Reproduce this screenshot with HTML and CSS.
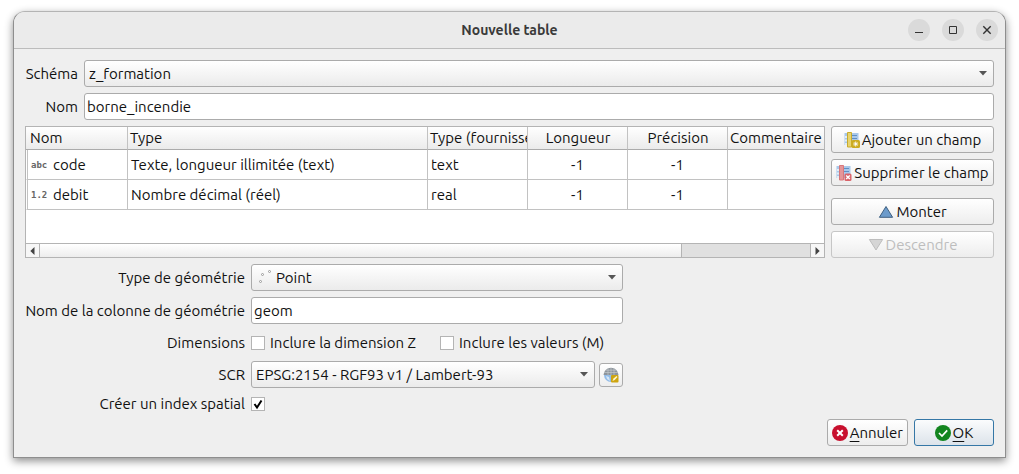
FILE: index.html
```html
<!DOCTYPE html>
<html lang="fr">
<head>
<meta charset="utf-8">
<title>Nouvelle table</title>
<link rel="stylesheet" href="styles.css">
</head>
<body>
<main class="dialog">
  <header class="titlebar">
    <h1 class="title">Nouvelle table</h1>
    <div class="window-controls">
      <button class="window-button" type="button" aria-label="Réduire"><svg width="22" height="22" viewBox="0 0 22 22"><path d="M7 13.5h8" stroke="#333" fill="none"/></svg></button>
      <button class="window-button" type="button" aria-label="Agrandir"><svg width="22" height="22" viewBox="0 0 22 22"><path d="M7.5 7.5h7v7h-7z" stroke="#333" fill="none"/></svg></button>
      <button class="window-button" type="button" aria-label="Fermer"><svg width="22" height="22" viewBox="0 0 22 22"><path d="M7.3 7.3l7.4 7.4M14.7 7.3l-7.4 7.4" stroke="#333" stroke-width="1.4" fill="none"/></svg></button>
    </div>
  </header>

  <form class="content">
    <div class="identity">
      <label for="schema">Schéma</label>
      <div class="select-box">
        <select class="field select" id="schema"><option>z_formation</option></select>
        <svg class="arrow" width="8" height="5" viewBox="0 0 8 5"><path d="M0 0h8L4 4.6z" fill="#555"/></svg>
      </div>
      <label for="name">Nom</label>
      <input class="field text" id="name" type="text" value="borne_incendie">
    </div>

    <div class="fields">
      <div class="grid-box">
        <div class="grid-view">
          <table class="grid">
            <colgroup><col class="col-name"><col class="col-type"><col class="col-small"><col class="col-small"><col class="col-small"><col></colgroup>
            <thead>
              <tr><th>Nom</th><th>Type</th><th>Type (fournisseur)</th><th class="num">Longueur</th><th class="num">Précision</th><th>Commentaire</th></tr>
            </thead>
            <tbody>
              <tr><td><div class="name-cell"><span class="kind">abc</span>code</div></td><td>Texte, longueur illimitée (text)</td><td>text</td><td class="num">-1</td><td class="num">-1</td><td></td></tr>
              <tr><td><div class="name-cell"><span class="kind">1.2</span>debit</div></td><td>Nombre décimal (réel)</td><td>real</td><td class="num">-1</td><td class="num">-1</td><td></td></tr>
            </tbody>
          </table>
        </div>
        <div class="scrollbar">
          <button class="scroll-button" type="button" aria-label="Défiler à gauche"><svg width="5" height="8" viewBox="0 0 5 8"><path d="M4.5 0v8L.3 4z" fill="#444"/></svg></button>
          <div class="track"><div class="thumb"></div></div>
          <button class="scroll-button" type="button" aria-label="Défiler à droite"><svg width="5" height="8" viewBox="0 0 5 8"><path d="M.5 0v8L4.7 4z" fill="#444"/></svg></button>
        </div>
      </div>
      <div class="actions">
        <button class="button" type="button">
          <svg width="16" height="16" viewBox="0 0 16 16"><path d="M.5 1h14v12H.5z" fill="#a9c8ea"/><path d="M8 3.500h5M8 6.500h5" stroke="#5f8fc4"/><path d="M1 4h2v2H1zM1 7.500h2v2H1zM1 11h2v2H1z" fill="#e4edf6"/><path d="M3.500.5h4v14.500h-4z" fill="#e8d470" stroke="#c9ab2c"/><rect x="7.500" y="8" width="8.500" height="8" rx="1.500" fill="#cdab1e"/><path d="M11.700 9.500v5M9.200 12h5M10 10.300l3.400 3.400M13.400 10.300L10 13.700" stroke="#fff" stroke-width=".9"/></svg>
          <span>Ajouter un champ</span></button>
        <button class="button" type="button">
          <svg width="16" height="16" viewBox="0 0 16 16"><path d="M.5 1h14v12H.5z" fill="#a9c8ea"/><path d="M8 3.500h5M8 6.500h5" stroke="#5f8fc4"/><path d="M1 4h2v2H1zM1 7.500h2v2H1zM1 11h2v2H1z" fill="#e4edf6"/><path d="M3.500.5h4v14.500h-4z" fill="#e59598" stroke="#d8777b"/><rect x="8.500" y="8.500" width="7" height="7.500" rx="1.500" fill="#d9636a"/><path d="M10.200 10.500l3.600 3.600M13.800 10.500l-3.600 3.600" stroke="#fff" stroke-width="1.400"/></svg>
          <span>Supprimer le champ</span></button>
        <button class="button move-up" type="button">
          <svg width="16" height="16" viewBox="0 0 16 16"><path d="M8 2.500l6.600 10.800H1.400z" fill="#6c9bcb" stroke="#3f6081"/></svg>
          <span>Monter</span></button>
        <button class="button" type="button" disabled>
          <svg width="16" height="16" viewBox="0 0 16 16"><path d="M8 13l6.600-10.500H1.400z" fill="#d5d5d5" stroke="#bdbdbd"/></svg>
          <span>Descendre</span></button>
      </div>
    </div>

    <div class="geometry">
      <label for="geomtype">Type de géométrie</label>
      <div class="select-box">
        <svg class="point-icon" width="16" height="16" viewBox="0 0 16 16"><g fill="#fff" stroke="#999"><circle cx="3.500" cy="12.500" r="1"/><circle cx="5.500" cy="5.500" r="1"/><circle cx="12.500" cy="2.500" r="1"/></g></svg>
        <select class="field select with-icon" id="geomtype"><option>Point</option></select>
        <svg class="arrow" width="8" height="5" viewBox="0 0 8 5"><path d="M0 0h8L4 4.6z" fill="#555"/></svg>
      </div>

      <label for="geomcol">Nom de la colonne de géométrie</label>
      <input class="field text" id="geomcol" type="text" value="geom">

      <span>Dimensions</span>
      <div class="dimensions">
        <label class="check-label"><input class="check" type="checkbox">Inclure la dimension Z</label>
        <label class="check-label"><input class="check" type="checkbox">Inclure les valeurs (M)</label>
      </div>

      <label for="crs">SCR</label>
      <div class="crs">
        <div class="select-box">
          <select class="field select" id="crs"><option>EPSG:2154 - RGF93 v1 / Lambert-93</option></select>
          <svg class="arrow" width="8" height="5" viewBox="0 0 8 5"><path d="M0 0h8L4 4.6z" fill="#555"/></svg>
        </div>
        <button class="button crs-button" type="button" aria-label="Choisir le SCR">
          <svg width="16" height="16" viewBox="0 0 16 16"><path d="M1 8a7 7 0 0 0 14 0z" fill="#92bce8"/><path d="M3 9l3 1 1 4-3-2z" fill="#d5e6f6"/><path d="M.5 8a7.500 7.200 0 0 1 15 0z" fill="#8d949b"/><path d="M1 5.500h14M3 3.200h10M5 1v7M8 1v7M11 1v7" stroke="#c3c8cc" stroke-width=".7"/><rect x="8" y="8" width="7.500" height="7.500" rx="1" fill="#cda410"/><path d="M9.500 14l1-2.500 3-2.500 1 1-2.800 3z" fill="#fff6cc"/></svg>
        </button>
      </div>

      <label for="index">Créer un index spatial</label>
      <input class="check" id="index" type="checkbox" checked>
    </div>

    <footer class="footer">
      <button class="button" type="button">
        <svg width="16" height="16" viewBox="0 0 16 16"><circle cx="8" cy="8" r="8" fill="#c8102e"/><path d="M5.200 5.200l5.600 5.600M10.800 5.200l-5.600 5.600" stroke="#fff" stroke-width="2"/></svg>
        <span><u>A</u>nnuler</span></button>
      <button class="button default" type="button">
        <svg width="16" height="16" viewBox="0 0 16 16"><circle cx="8" cy="8" r="8" fill="#12851f"/><path d="M4 8l3 3 5.200-5.600" fill="none" stroke="#fff" stroke-width="1.700"/></svg>
        <span><u>O</u>K</span></button>
    </footer>
  </form>
</main>
</body>
</html>
```
FILE: styles.css
```css
* { box-sizing: border-box; }

body {
  margin: 0;
  padding: 11px 13px 15px;
  background: #fff;
  color: #111;
  font: 15px/20px Ubuntu, "Noto Sans", sans-serif;
}

button, input, select { font: inherit; color: inherit; margin: 0; }

.dialog {
  border: 1px solid #8e8e8e;
  border-top-color: #b4b4b4;
  border-radius: 12px 12px 0 0;
  background: #efefef;
  box-shadow: 0 3px 9px rgba(0, 0, 0, .45);
}

.titlebar {
  display: grid;
  grid-template-columns: 1fr auto 1fr;
  align-items: center;
  height: 37px;
  padding-right: 7px;
  border-bottom: 1px solid #bcbcbc;
  border-radius: 11px 11px 0 0;
  background: #ebebeb;
}

.title {
  grid-column: 2;
  margin: 0;
  padding-left: 7px;
  color: #3a3a3a;
  font-size: 14px;
  font-weight: 700;
}

.window-controls { display: flex; justify-content: flex-end; gap: 12px; }

.window-button {
  display: flex;
  width: 22px;
  height: 22px;
  padding: 0;
  border: 0;
  border-radius: 50%;
  background: #dadada;
}

.content { padding: 11px 11px; }

.identity {
  display: grid;
  grid-template-columns: 53px 1fr;
  gap: 6px;
  align-items: center;
  text-align: right;
}

.field {
  display: block;
  width: 100%;
  height: 27px;
  border: 1px solid #ababab;
  border-radius: 3px;
  outline: 0;
}

.text { padding: 0 2px; background: #fff; }

.select {
  appearance: none;
  padding: 0 20px 0 4px;
  background: linear-gradient(#fff, #ebebeb);
}

.with-icon { padding-left: 24px; }

.select-box { position: relative; text-align: left; }

.arrow { position: absolute; right: 7px; top: 11px; pointer-events: none; }

.point-icon { position: absolute; left: 6px; top: 5px; pointer-events: none; }

.fields { display: flex; gap: 6px; margin-top: 6px; }

.grid-box {
  display: flex;
  flex: 1;
  flex-direction: column;
  min-width: 0;
  border: 1px solid #b4b4b4;
  background: #fff;
}

.grid-view { flex: 1; overflow: hidden; }

.grid {
  width: 100%;
  table-layout: fixed;
  border-collapse: separate;
  border-spacing: 0;
}

.col-name { width: 102px; }
.col-type { width: 300px; }
.col-small { width: 100px; }

.grid th, .grid td {
  overflow: hidden;
  padding: 0 3px;
  border-right: 1px solid #c2c2c2;
  border-bottom: 1px solid #c2c2c2;
  text-align: left;
  white-space: nowrap;
}

.grid th {
  height: 23px;
  padding: 0 1px 0 2px;
  border-bottom-color: #ababab;
  background: linear-gradient(#fff, #ebebeb);
  font-weight: 400;
}

.grid th:first-child { padding-left: 4px; }
.grid td { height: 30px; }
.grid td:first-child { border-left: 1px solid #fff; box-shadow: inset 1px 0 #c2c2c2; }
.grid th:last-child, .grid td:last-child { border-right: 0; }
.grid .num { text-align: center; }

.name-cell { display: flex; align-items: center; padding-left: 1px; }

.kind {
  width: 22px;
  color: #666;
  font: bold 9px/16px "DejaVu Sans Mono", monospace;
}

.scrollbar { display: flex; height: 14px; border-top: 1px solid #b4b4b4; }

.scroll-button {
  display: flex;
  align-items: center;
  justify-content: center;
  width: 13px;
  padding: 0;
  border: 0;
  background: #f7f7f7;
}

.track {
  flex: 1;
  border: solid #b4b4b4;
  border-width: 0 1px;
  background: #e0e0e0;
}

.thumb {
  width: calc(100% * 5 / 6);
  height: 100%;
  border-right: 1px solid #b4b4b4;
  background: linear-gradient(#fff, #ededed);
}

.actions { display: flex; flex: 0 0 163px; flex-direction: column; gap: 6px; }

.move-up { margin-top: 6px; }

.button {
  display: flex;
  align-items: center;
  justify-content: center;
  gap: 2px;
  height: 27px;
  padding: 0 4px;
  border: 1px solid #ababab;
  border-radius: 3px;
  background: linear-gradient(#fff, #ededed);
  white-space: nowrap;
}

.button svg { flex: none; }
.button:disabled { border-color: #c6c6c6; color: #bdbdbd; }

.geometry {
  display: grid;
  grid-template-columns: 220px minmax(0, 372px);
  gap: 6px;
  align-items: center;
  margin-top: 6px;
  text-align: right;
}

.dimensions { display: flex; gap: 24px; height: 25px; }

.check-label { display: flex; align-items: center; gap: 5px; }

.check {
  appearance: none;
  width: 14px;
  height: 14px;
  border: 1px solid #b4b4b4;
  background: #fff;
}

.check:checked {
  background: #fff url("data:image/svg+xml,%3Csvg xmlns='http://www.w3.org/2000/svg' viewBox='0 0 12 12'%3E%3Cpath d='M2.500 6l2.500 3.500L9.500 2.500' fill='none' stroke='%23000' stroke-width='2'/%3E%3C/svg%3E");
}

.crs { display: flex; align-items: center; gap: 4px; }
.crs .select-box { flex: 1; }
.crs-button { width: 24px; height: 24px; padding: 0; }

.footer { display: flex; justify-content: flex-end; gap: 6px; margin-top: 5px; }

.footer .button { min-width: 80px; }

.footer .default {
  border-color: #3577a6;
  background: linear-gradient(#fbfcfd, #dce3ea);
}

u { text-underline-offset: 3px; }
```
